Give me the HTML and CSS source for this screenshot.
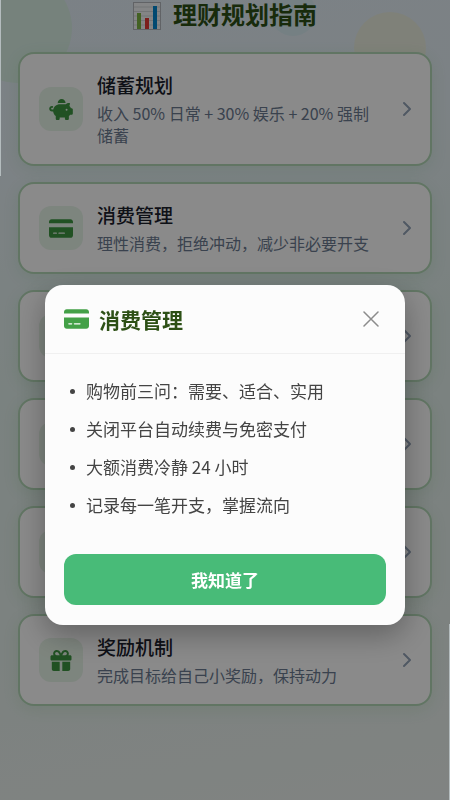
FILE: index.html
```html
<!DOCTYPE html>
<html lang="zh-CN">
	<head>
		<meta charset="utf-8" />
		<meta name="viewport" content="width=device-width, initial-scale=1" />
		<title>理财规划指南</title>
		<link rel="stylesheet" href="styles.css">
	</head>
	<body>
		<!-- 图标统一定义，下面用use引用 -->
		<svg class="sprite" aria-hidden="true">
			<symbol id="icon-card" viewBox="0 32 576 448">
				<path fill-rule="evenodd" d="M64 32C28.7 32 0 60.7 0 96v32H576V96c0-35.3-28.7-64-64-64H64zM576 224H0V416c0 35.3 28.7 64 64 64H512c35.3 0 64-28.7 64-64V224zM112 352h64c8.800 0 16 7.200 16 16s-7.200 16-16 16H112c-8.800 0-16-7.200-16-16s7.200-16 16-16zm112 16c0-8.800 7.200-16 16-16H368c8.800 0 16 7.200 16 16s-7.200 16-16 16H240c-8.800 0-16-7.200-16-16z"/>
			</symbol>
			<symbol id="icon-piggy" viewBox="0 0 576 512">
				<path d="M400 96l0 .7c-5.300-.4-10.600-.7-16-.7H256c-16.500 0-32.500 2.100-47.800 6c-.1-2-.2-4-.2-6c0-53 43-96 96-96s96 43 96 96zm-16 32c3.500 0 7 .1 10.400 .3c4.200 .3 8.400 .7 12.600 1.300C424.600 109.100 450.800 96 480 96h11.500c10.400 0 18 9.800 15.500 19.900l-13.800 55.200c15.800 14.800 28.700 32.800 37.500 52.900H544c17.700 0 32 14.300 32 32v96c0 17.700-14.300 32-32 32H512c-9.100 12.100-19.900 22.900-32 32v64c0 17.700-14.300 32-32 32H416c-17.700 0-32-14.300-32-32V448H256v32c0 17.700-14.300 32-32 32H192c-17.700 0-32-14.300-32-32V416c-34.900-26.200-58.700-66.300-63.200-112H68c-37.600 0-68-30.400-68-68s30.400-68 68-68h4c13.300 0 24 10.700 24 24s-10.700 24-24 24H68c-11 0-20 9-20 20s9 20 20 20H99.200c12.100-59.800 57.700-107.500 116.300-122.800c12.900-3.400 26.500-5.200 40.500-5.200H384zm64 136a24 24 0 1 0 -48 0 24 24 0 1 0 48 0z"/>
			</symbol>
			<symbol id="icon-gift" viewBox="0 0 512 512">
				<path d="M190.500 68.800L225.300 128H224 152c-22.100 0-40-17.900-40-40s17.900-40 40-40h2.200c14.900 0 28.800 7.900 36.300 20.800zM64 88c0 14.400 3.500 28 9.600 40H32c-17.700 0-32 14.300-32 32v64c0 17.700 14.300 32 32 32H480c17.700 0 32-14.300 32-32V160c0-17.700-14.300-32-32-32H438.400c6.100-12 9.600-25.600 9.600-40c0-48.600-39.400-88-88-88h-2.200c-31.900 0-61.500 16.900-77.700 44.400L256 85.500l-24.100-41C215.700 16.900 186.100 0 154.200 0H152C103.400 0 64 39.400 64 88zm336 0c0 22.100-17.900 40-40 40H288h-1.300l34.800-59.200C329.100 55.900 342.900 48 357.800 48H360c22.100 0 40 17.900 40 40zM32 288V464c0 26.500 21.500 48 48 48H224V288H32zM288 512H432c26.500 0 48-21.500 48-48V288H288V512z"/>
			</symbol>
			<symbol id="icon-arrow" viewBox="0 0 10 16">
				<path d="M2 2l6 6-6 6" fill="none" stroke="currentColor" stroke-width="2" stroke-linecap="round" stroke-linejoin="round"/>
			</symbol>
		</svg>

		<div class="bubble bubble-green"></div>
		<div class="bubble bubble-blue"></div>
		<div class="bubble bubble-yellow"></div>

		<div class="page">
			<h1 class="page-title">
				<svg class="chart" viewBox="0 0 28 28" aria-hidden="true">
					<rect x="0.500" y="0.500" width="27" height="27" fill="#f4f6f8" stroke="#b4b8bc"/>
					<path d="M1 5h26M1 9.500h26M1 14h26M1 18.500h26M1 23h26" stroke="#d4d8da" stroke-width="1"/>
					<rect x="4" y="11" width="4" height="16" fill="#7cb342"/>
					<rect x="12" y="16" width="4" height="11" fill="#e53935"/>
					<rect x="20" y="4" width="4" height="23" fill="#0288d1"/>
				</svg>
				理财规划指南
			</h1>

			<div class="list">
				<button class="card" type="button">
					<span class="card-icon"><svg><use href="#icon-piggy"/></svg></span>
					<span class="card-text">
						<span class="card-title">储蓄规划</span>
						<span class="card-desc">收入 50% 日常 + 30% 娱乐 + 20% 强制储蓄</span>
					</span>
					<svg class="arrow"><use href="#icon-arrow"/></svg>
				</button>

				<button class="card" type="button">
					<span class="card-icon"><svg><use href="#icon-card"/></svg></span>
					<span class="card-text">
						<span class="card-title">消费管理</span>
						<span class="card-desc">理性消费，拒绝冲动，减少非必要开支</span>
					</span>
					<svg class="arrow"><use href="#icon-arrow"/></svg>
				</button>

				<button class="card" type="button">
					<span class="card-icon"></span>
					<span class="card-text"></span>
					<svg class="arrow"><use href="#icon-arrow"/></svg>
				</button>

				<button class="card" type="button">
					<span class="card-icon"></span>
					<span class="card-text"></span>
					<svg class="arrow"><use href="#icon-arrow"/></svg>
				</button>

				<button class="card" type="button">
					<span class="card-icon"></span>
					<span class="card-text"></span>
					<svg class="arrow"><use href="#icon-arrow"/></svg>
				</button>

				<button class="card" type="button">
					<span class="card-icon"><svg><use href="#icon-gift"/></svg></span>
					<span class="card-text">
						<span class="card-title">奖励机制</span>
						<span class="card-desc">完成目标给自己小奖励，保持动力</span>
					</span>
					<svg class="arrow"><use href="#icon-arrow"/></svg>
				</button>
			</div>
		</div>

		<!-- 弹窗 -->
		<div class="mask">
			<div class="modal" role="dialog" aria-modal="true" aria-labelledby="modal-title">
				<div class="modal-header">
					<svg class="modal-icon"><use href="#icon-card"/></svg>
					<h2 class="modal-title" id="modal-title">消费管理</h2>
					<button class="close" type="button" aria-label="关闭">
						<svg viewBox="0 0 16 16"><path d="M1 1l14 14M15 1L1 15" stroke="currentColor" stroke-width="1.500" stroke-linecap="round"/></svg>
					</button>
				</div>
				<ul class="tips">
					<li>购物前三问：需要、适合、实用</li>
					<li>关闭平台自动续费与免密支付</li>
					<li>大额消费冷静 24 小时</li>
					<li>记录每一笔开支，掌握流向</li>
				</ul>
				<div class="modal-footer">
					<button class="confirm" type="button">我知道了</button>
				</div>
			</div>
		</div>
	</body>
</html>
```
FILE: styles.css
```css
*{
	box-sizing: border-box;
}
body{
	position: relative;
	margin: 0;
	min-height: 100vh;
	overflow-x: hidden;
	font-family: "Noto Sans CJK SC", sans-serif;
	background: linear-gradient(170deg, #e4eff7 0%, #e6f0f5 20%, #e2f0ec 45%, #e6f0ec 75%, #edf3f0 100%);
}
button{
	font-family: inherit;
	cursor: pointer;
}
.sprite{
	position: absolute;
	width: 0;
	height: 0;
}

/* 背景装饰圆 */
.bubble{
	position: absolute;
	border-radius: 50%;
}
.bubble-green{
	width: 110px;
	height: 110px;
	left: -38px;
	top: -27px;
	background-color: #daf0e6;
}
.bubble-blue{
	width: 46px;
	height: 46px;
	left: 60%;
	top: -10px;
	background-color: #d9ecf2;
}
.bubble-yellow{
	width: 72px;
	height: 72px;
	right: 24px;
	top: 12px;
	background-color: #ebeee0;
}

/* 页面 */
.page{
	position: relative;
	padding: 0 18px 92px;
}
.page-title{
	display: flex;
	justify-content: center;
	align-items: center;
	gap: 12px;
	height: 32px;
	margin: 0 0 20px;
	font-family: "Liberation Sans", "Noto Sans CJK SC", sans-serif;
	font-size: 24px;
	line-height: 32px;
	font-weight: 700;
	color: #2d5016;
}
.chart{
	width: 28px;
	height: 28px;
}
.list{
	display: flex;
	flex-direction: column;
	gap: 16px;
}
.card{
	display: flex;
	align-items: center;
	gap: 14px;
	width: 100%;
	min-height: 92px;
	padding: 18px;
	padding-left: 19px;
	border: 2px solid #b4d9b8;
	border-radius: 16px;
	background-color: #fff;
	box-shadow: 0 4px 16px rgba(76, 175, 80, 0.12);
	text-align: left;
}
.card-icon{
	display: flex;
	flex-shrink: 0;
	justify-content: center;
	align-items: center;
	width: 44px;
	height: 44px;
	border-radius: 12px;
	background-color: #e8f5e9;
	color: #3d9641;
}
.card-icon svg{
	width: 24px;
	height: 21px;
	fill: currentColor;
}
.card-text{
	display: flex;
	flex: 1;
	flex-direction: column;
	gap: 4px;
	padding-right: 12px;
}
.card-title{
	font-size: 19px;
	line-height: 26px;
	font-weight: 500;
	color: #1a202c;
}
.card-desc{
	font-size: 16px;
	line-height: 22px;
	color: #6b7a90;
}
.arrow{
	flex-shrink: 0;
	width: 10px;
	height: 16px;
	color: #94a3b8;
}

/* 遮罩和弹窗 */
.mask{
	position: fixed;
	inset: 0;
	display: flex;
	justify-content: center;
	align-items: center;
	padding-top: 110px;
	background-color: rgba(0, 0, 0, 0.46);
}
/* 屏幕两侧的细亮边 */
.mask::before,.mask::after{
	content: "";
	position: absolute;
	width: 1px;
	height: 22%;
	background-color: #b4bcbe;
}
.mask::before{
	left: 0;
	top: 0;
}
.mask::after{
	right: 0;
	bottom: 0;
}
.modal{
	width: 80%;
	border-radius: 18px;
	background-color: #fcfcfc;
	box-shadow: 0 10px 30px rgba(0, 0, 0, 0.3);
}
.modal-header{
	display: flex;
	align-items: center;
	gap: 10px;
	height: 69px;
	padding: 0 26px 0 19px;
	border-bottom: 1px solid #f0f0f0;
}
.modal-icon{
	width: 25px;
	height: 20px;
	fill: #43a047;
}
.modal-title{
	flex: 1;
	margin: 0;
	font-size: 21px;
	line-height: 28px;
	font-weight: 700;
	color: #2d5016;
}
.close{
	display: flex;
	padding: 0;
	border: none;
	background: none;
	color: #8c8c8c;
}
.close svg{
	width: 16px;
	height: 16px;
}
.tips{
	margin: 0;
	padding: 18px 19px 30px;
	list-style: none;
	font-size: 17px;
	line-height: 38px;
	color: #444;
}
.tips li{
	display: flex;
	align-items: center;
	gap: 11px;
	padding-left: 6px;
}
.tips li::before{
	content: "";
	width: 5px;
	height: 5px;
	border-radius: 50%;
	background-color: #444;
}
.modal-footer{
	padding: 0 19px 20px;
}
.confirm{
	display: block;
	width: 100%;
	height: 51px;
	border: none;
	border-radius: 12px;
	background-color: #48bb78;
	font-size: 17px;
	font-weight: 700;
	color: #fff;
}
```
